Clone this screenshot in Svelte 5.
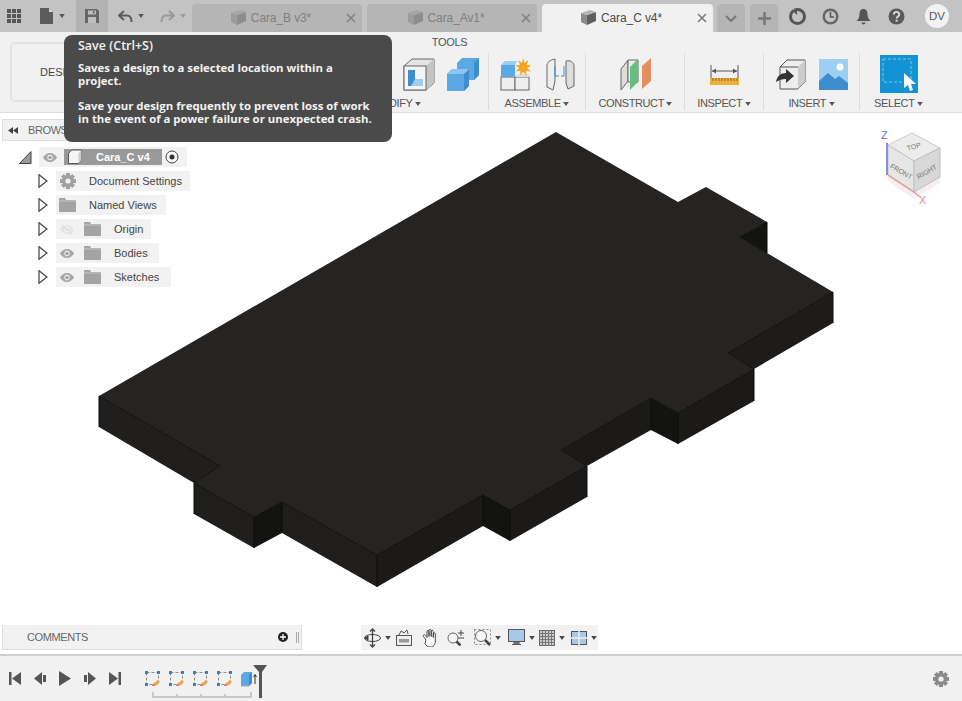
<script>
  const tabs = [
    { name: 'Cara_B v3*', active: false },
    { name: 'Cara_Av1*', active: false },
    { name: 'Cara_C v4*', active: true }
  ];
  const tree = [
    { name: 'Document Settings', kind: 'gear', eye: '' , w: 134 },
    { name: 'Named Views', kind: 'folder', eye: '', w: 110 },
    { name: 'Origin', kind: 'folder', eye: 'off', w: 95 },
    { name: 'Bodies', kind: 'folder', eye: 'on', w: 103 },
    { name: 'Sketches', kind: 'folder', eye: 'on', w: 115 }
  ];
  const top = '556,132 678,202 706,187 767,222 740,237 767,253 833,292 728,353 754,369 678,413 651,398 561,450 587,466 510,510 483,495 377,555 282,502 254,517 194,483 220,466 99,396';
  const walls = [
    ['99,396 220,466 194,483 99,427', '#201f1d'],
    ['194,483 254,517 254,548 194,514', '#1f1e1c'],
    ['254,517 282,502 282,533 254,548', '#131312'],
    ['282,502 377,555 377,587 282,533', '#1f1e1c'],
    ['377,555 483,495 483,526 377,587', '#1b1a18'],
    ['483,495 510,510 510,541 483,526', '#131312'],
    ['510,510 587,466 587,497 510,541', '#1b1a18'],
    ['561,450 651,398 651,430 587,466', '#1b1a18'],
    ['651,398 678,413 678,444 651,430', '#131312'],
    ['678,413 754,369 754,401 678,444', '#1b1a18'],
    ['728,353 833,292 833,323 754,369', '#1d1c1a'],
    ['740,237 767,222 767,253', '#131312']
  ];
  const edges = [
    '99,396 99,427', '220,466 99,396', '194,483 220,466', '194,483 194,514', '194,483 254,517 254,548',
    '254,517 282,502 282,533', '282,502 377,555 377,587', '377,555 483,495 483,526', '483,495 510,510 510,541',
    '510,510 587,466 587,497', '561,450 587,466', '561,450 651,398 651,430', '651,398 678,413 678,444',
    '678,413 754,369 754,401', '728,353 754,369', '728,353 833,292 833,323', '740,237 767,222 767,253', '740,237 767,253'
  ];
</script>

{#snippet caret(c = '#666')}
  <svg class="caret" width="6" height="4" viewBox="0 0 7 5"><path d="M0 0h7L3.500 5z" fill={c} /></svg>
{/snippet}

{#snippet cube(c1, c2, c3)}
  <svg width="17" height="16" viewBox="0 0 17 16">
    <path d="M1 3l6 2v10l-6-3z" fill={c1} />
    <path d="M7 5l9-3v9l-9 4z" fill={c2} />
    <path d="M1 3l9-3 6 2-9 3z" fill={c3} />
  </svg>
{/snippet}

{#snippet eye(off)}
  <svg width="16" height="11" viewBox="0 0 18 12">
    <path d="M1 6c3-4 5-5 8-5s5 1 8 5c-3 4-5 5-8 5s-5-1-8-5z" fill={off ? '#e6e6e6' : '#a8a8a8'} />
    <circle cx="9" cy="6" r="3" fill={off ? '#f2f2f2' : '#eee'} />
    <circle cx="9" cy="6" r="1.800" fill={off ? '#ddd' : '#999'} />
    {#if off}<path d="M3 1l12 10" stroke="#ddd" stroke-width="1.500" />{/if}
  </svg>
{/snippet}

{#snippet folder()}
  <svg width="17" height="14" viewBox="0 0 17 14"><path d="M0 0h6l1 2h10v12H0z" fill="#a3a3a3" /><path d="M0 3h17" stroke="#c9c9c9" /></svg>
{/snippet}

{#snippet gear()}
  <svg width="18" height="18" viewBox="0 0 18 18">
    <g fill="#a0a0a0">
      <circle cx="9" cy="9" r="6" />
      <rect x="7" y="1" width="4" height="16" />
      <rect x="1" y="7" width="16" height="4" />
      <rect x="7" y="1" width="4" height="16" transform="rotate(45 9 9)" />
      <rect x="7" y="1" width="4" height="16" transform="rotate(-45 9 9)" />
    </g>
    <circle cx="9" cy="9" r="2.600" fill="#f2f2f2" />
  </svg>
{/snippet}

{#snippet sketch()}
  <svg class="tl" width="16" height="16" viewBox="0 0 16 16">
    <rect x="1.500" y="1.500" width="12" height="12" fill="none" stroke="#8a8a8a" stroke-dasharray="3 2" />
    <g fill="#3b7fc4"><rect x="0" y="0" width="3" height="3" /><rect x="12" y="0" width="3" height="3" /><rect x="0" y="12" width="3" height="3" /></g>
    <path d="M8 13l5-4 2 2-5 4z" fill="#f0a640" /><path d="M8 13l-1 2 3 0z" fill="#d8574b" />
  </svg>
{/snippet}

<div class="app">
  <header class="top">
    <div class="hb apps">
      <svg width="14" height="14" viewBox="0 0 14 14" fill="#555">
        {#each [0, 5, 10] as y}{#each [0, 5, 10] as x}<rect {x} {y} width="4" height="4" />{/each}{/each}
      </svg>
    </div>
    <div class="hb file">
      <svg width="13" height="16" viewBox="0 0 13 16"><path d="M0 0h9l4 4v12H0z" fill="#5c5c5c" /><path d="M9 0v4h4" fill="#ddd" /></svg>
      {@render caret('#555')}
    </div>
    <div class="hb save">
      <svg width="14" height="14" viewBox="0 0 14 14"><path d="M0 0h12l2 2v12H0z" fill="#666" /><rect x="3" y="1.500" width="8" height="4" fill="#bdbdbd" /><rect x="3" y="8" width="8" height="6" fill="#bdbdbd" /><rect x="8" y="2" width="1.500" height="2.500" fill="#666" /></svg>
    </div>
    <div class="hb undo">
      <svg width="15" height="13" viewBox="0 0 15 13"><path d="M6 1L1 5.500 6 10M2 5.500h7c3 0 4.500 2 4.500 6.500" fill="none" stroke="#5c5c5c" stroke-width="2" /></svg>
      {@render caret('#555')}
    </div>
    <div class="hb undo">
      <svg width="15" height="13" viewBox="0 0 15 13"><path d="M9 1l5 4.500L9 10M13 5.500H6C3 5.500 1.500 7.500 1.500 12" fill="none" stroke="#999" stroke-width="2" /></svg>
      {@render caret('#999')}
    </div>

    <div class="tabs">
      {#each tabs as t}
        <div class="tab" class:active={t.active}>
          <span class="tabname">
            {#if t.active}
              {@render cube('#8a8a8a', '#5f5f5f', '#b5b5b5')}
            {:else}
              {@render cube('#9c9c9c', '#8d8d8d', '#a6a6a6')}
            {/if}
            {t.name}
          </span>
          <svg class="x" width="10" height="10" viewBox="0 0 10 10"><path d="M1 1l8 8M9 1l-8 8" stroke={t.active ? '#777' : '#808080'} stroke-width="1.500" /></svg>
        </div>
      {/each}
      <div class="tab mini">
        <svg width="12" height="7" viewBox="0 0 12 7"><path d="M1 1l5 5 5-5" fill="none" stroke="#777" stroke-width="2" /></svg>
      </div>
      <div class="tab mini">
        <svg width="13" height="13" viewBox="0 0 13 13"><path d="M6.500 0v13M0 6.500h13" stroke="#777" stroke-width="2.500" /></svg>
      </div>
    </div>

    <div class="status">
      <svg width="17" height="17" viewBox="0 0 17 17"><circle cx="8.500" cy="8.500" r="7" fill="none" stroke="#555" stroke-width="3" /><path d="M4 1l6 3-3 4z" fill="#c4c4c4" /><path d="M3 2h5v5z" fill="#555" /></svg>
      <svg width="17" height="17" viewBox="0 0 17 17"><circle cx="8.500" cy="8.500" r="8" fill="#666" /><circle cx="8.500" cy="8.500" r="5.500" fill="#c4c4c4" /><path d="M8.500 4v5H12" fill="none" stroke="#555" stroke-width="1.500" /></svg>
      <svg width="15" height="17" viewBox="0 0 15 17"><path d="M7.500 1c3 0 4 2.500 4 5 0 3 1 5 3 7H.5c2-2 3-4 3-7 0-2.500 1-5 4-5z" fill="#555" /><path d="M5.500 14.500a2 2 0 004 0z" fill="#555" /></svg>
      <svg width="17" height="17" viewBox="0 0 17 17"><circle cx="8.500" cy="8.500" r="8" fill="#5a5a5a" /><path d="M5.800 6.500c0-3.500 5.500-3.500 5.500 0 0 2-2.700 2-2.700 4" fill="none" stroke="#ddd" stroke-width="1.800" /><rect x="7.600" y="11.700" width="2" height="2" fill="#ddd" /></svg>
      <div class="avatar">DV</div>
    </div>
  </header>

  <section class="ribbon">
    <div class="design">DESIGN {@render caret('#444')}</div>
    <div class="tools">
      <div class="tools-title">TOOLS</div>
      <div class="groups">
        <div class="grp modify">
          <div class="icons">
            <svg width="32" height="33" viewBox="0 0 32 33"><rect x="1" y="8" width="24" height="24" fill="#eee" stroke="#666" /></svg>
            <svg width="32" height="33" viewBox="0 0 32 33"><rect x="1" y="8" width="24" height="24" fill="#eee" stroke="#666" /></svg>
            <svg width="32" height="33" viewBox="0 0 32 33">
              <path d="M1 8L9 1h22v24l-8 7H1z" fill="#e4e4e4" stroke="#666" />
              <path d="M23 32V8L31 1v24z" fill="#c4c4c4" />
              <rect x="1" y="8" width="22" height="24" fill="#f4f4f4" stroke="#666" />
              <path d="M5 12h7v9h8v7H5z" fill="#3e8dce" /><path d="M12 21h8v7h-12z" fill="#9dcdf0" />
            </svg>
            <svg width="32" height="33" viewBox="0 0 32 33">
              <path d="M10 5l5-5h17v17l-5 5H10z" fill="#5aa9e4" /><path d="M27 22V5l5-5v17z" fill="#3e8dce" />
              <path d="M0 16l5-5h17v17l-5 5H0z" fill="#5aa9e4" /><path d="M17 33V16l5-5v17z" fill="#3e8dce" /><path d="M0 16l5-5h17l-5 5z" fill="#8cc6ef" />
            </svg>
          </div>
          <div class="lbl">MODIFY {@render caret('#555')}</div>
        </div>
        <div class="grp assemble">
          <div class="icons">
            <svg width="32" height="33" viewBox="0 0 32 33">
              <rect x="1" y="19" width="14" height="13" fill="#eee" stroke="#666" /><rect x="15" y="19" width="14" height="13" fill="#eee" stroke="#666" />
              <path d="M15 19l3-3h11v3z" fill="#ddd" />
              <rect x="1" y="7" width="14" height="12" fill="#5aa9e4" /><path d="M1 7l4-4h12l-2 4z" fill="#9bcdf0" />
              <path d="M23 0l1.500 5 4-3-2 5 5 .500-4.500 2.500 4 3.500-5-.8.500 5-3.500-4-3 4 .500-5-5 .8 4-3.500-4.500-2.500 5-.5-2-5 4 3z" fill="#f2a51f" />
            </svg>
            <svg width="29" height="33" viewBox="0 0 29 33" fill="none" stroke="#666">
              <path d="M1 8c0-4 3-6 8-7v22l-2 9-6-3z" fill="#eee" />
              <path d="M28 8c0-4-4-6-8-5v22l2 6 6-3z" fill="#ddd" />
              <path d="M9 8v10h4M18 8v10h-3" stroke="#3e8dce" />
            </svg>
          </div>
          <div class="lbl">ASSEMBLE {@render caret('#555')}</div>
        </div>
        <div class="grp construct">
          <div class="icons">
            <svg width="32" height="33" viewBox="0 0 32 33">
              <path d="M1 11L8 2v21l-7 9z" fill="#ddd" stroke="#666" /><path d="M8 2h10v22H8z" fill="#ececec" stroke="#666" />
              <path d="M10 32V9l8-8h0v23z" fill="#67bf7f" />
              <path d="M22 31V8l9-8v23z" fill="#e58f5f" />
            </svg>
          </div>
          <div class="lbl">CONSTRUCT {@render caret('#555')}</div>
        </div>
        <div class="grp inspect">
          <div class="icons">
            <svg width="29" height="20" viewBox="0 0 29 20">
              <path d="M1 0v13M28 0v13" stroke="#555" /><path d="M2 6h25" stroke="#555" /><path d="M2 6l4-2.500v5zM27 6l-4-2.500v5z" fill="#555" />
              <rect x="0" y="13" width="29" height="7" fill="#eeb03a" />
              <path d="M3 13v3M6 13v3M9 13v3M12 13v3M15 13v3M18 13v3M21 13v3M24 13v3M27 13v3" stroke="#8a6420" />
            </svg>
          </div>
          <div class="lbl">INSPECT {@render caret('#555')}</div>
        </div>
        <div class="grp insert">
          <div class="icons">
            <svg width="30" height="31" viewBox="0 0 30 31">
              <path d="M4 8l7-7h18v22l-7 7H4z" fill="#eee" stroke="#555" /><path d="M22 30V8l7-7v22z" fill="#ccc" />
              <path d="M4 8h18" stroke="#555" />
              <path d="M0 23c1-6 5-9 10-9v-4l8 7-8 7v-4c-4 0-7 1-10 3z" fill="#333" />
            </svg>
            <svg width="29" height="31" viewBox="0 0 29 31">
              <rect x="0" y="0" width="29" height="31" fill="#9ccff2" />
              <path d="M0 31V22l9-8 7 6 4-3 9 7v7z" fill="#3e8dce" />
              <circle cx="21" cy="8" r="3.500" fill="#fff" />
            </svg>
          </div>
          <div class="lbl">INSERT {@render caret('#555')}</div>
        </div>
        <div class="grp select">
          <div class="icons">
            <svg width="38" height="38" viewBox="0 0 38 38">
              <rect width="38" height="38" fill="#1393d4" />
              <rect x="3" y="4" width="28" height="23" fill="none" stroke="#7cc7ec" stroke-dasharray="3 2" />
              <path d="M24 18v15l4-3 2 6 3-1-2-6h5z" fill="#fff" />
            </svg>
          </div>
          <div class="lbl">SELECT {@render caret('#555')}</div>
        </div>
      </div>
    </div>
  </section>

  <main class="view">
    <svg class="model" width="962" height="701" viewBox="0 0 962 701">
      {#each walls as w}<polygon points={w[0]} fill={w[1]} />{/each}
      <polygon points={top} fill="#252422" />
      {#each edges as e}<polyline points={e} fill="none" stroke="#0b0b0a" stroke-width="1" />{/each}
    </svg>

    <aside class="browser">
      <div class="browser-bar">
        <svg width="10" height="7" viewBox="0 0 10 7"><path d="M5 0v7L0 3.500zM10 0v7L5 3.500z" fill="#444" /></svg>
        <span>BROWSER</span>
      </div>
      <div class="row root">
        <svg class="exp" width="13" height="13" viewBox="0 0 13 13"><path d="M12 .5v12H.5z" fill="#999" stroke="#444" /></svg>
        <div class="item rootitem">
          {@render eye(false)}
          <div class="rootname">
            <svg width="16" height="16" viewBox="0 0 16 16"><path d="M1.500 4.500L4.500 1h10v10l-3 3.500h-10z" fill="#f5f5f5" stroke="#555" /><path d="M11.500 14.500v-10L14.500 1v10z" fill="#ccc" /></svg>
            <b>Cara_C v4</b>
          </div>
          <svg class="radio" width="14" height="14" viewBox="0 0 14 14"><circle cx="7" cy="7" r="6" fill="#f8f8f8" stroke="#444" /><circle cx="7" cy="7" r="2.500" fill="#333" /></svg>
        </div>
      </div>
      {#each tree as n}
        <div class="row">
          <svg class="exp child" width="10" height="14" viewBox="0 0 10 14"><path d="M1 .7v12.600L9 7z" fill="#fff" stroke="#444" stroke-width="1.200" /></svg>
          <div class="item" style="width:{n.w}px">
            {#if n.kind === 'gear'}
              <span class="ic">{@render gear()}</span>
            {:else if n.eye}
              <span class="ic">{@render eye(n.eye === 'off')}</span>
              <span class="ic second">{@render folder()}</span>
            {:else}
              <span class="ic">{@render folder()}</span>
            {/if}
            <span class="nm" class:deep={n.eye}>{n.name}</span>
          </div>
        </div>
      {/each}
    </aside>

    <div class="vcube">
      <svg width="64" height="80" viewBox="0 0 64 80">
        <path d="M9 48l26 17 26-15v6L35 72 9 54z" fill="#f7efef" />
        <path d="M9 18L33 6l28 15-26 13z" fill="#ececec" stroke="#c8c8c8" />
        <path d="M9 18l26 16v31L9 48z" fill="#e6e6e6" stroke="#c4c4c4" />
        <path d="M35 34l26-13v29L35 65z" fill="#d8d8d8" stroke="#bebebe" />
        <path d="M8 16v32" stroke="#6a6fd0" stroke-width="1.500" />
        <path d="M9 48l26 17 6 5" stroke="#e0a0a0" stroke-width="1.500" fill="none" />
        <text class="fc" x="35" y="22" transform="rotate(-14 35 20)">TOP</text>
        <text class="fc" x="22" y="47" transform="rotate(30 22 45)">FRONT</text>
        <text class="fc" x="48" y="47" transform="rotate(-30 48 45)">RIGHT</text>
        <text class="ax z" x="2" y="12">Z</text>
        <text class="ax xa" x="40" y="77">X</text>
      </svg>
    </div>

    <div class="comments">
      <span class="c-title">COMMENTS</span>
      <svg width="10" height="10" viewBox="0 0 10 10"><circle cx="5" cy="5" r="5" fill="#222" /><path d="M5 2v6M2 5h6" stroke="#fff" stroke-width="1.300" /></svg>
      <svg class="grip" width="3" height="11" viewBox="0 0 3 11"><path d="M.5 0v11M2.500 0v11" stroke="#aaa" /></svg>
    </div>

    <div class="nav">
      <div class="nv">
        <svg width="17" height="20" viewBox="0 0 17 20" fill="none" stroke="#444"><ellipse cx="8.500" cy="10" rx="8" ry="3.500" /><path d="M8.500 1v18M6 3.500L8.500 1 11 3.500M6 16.500L8.500 19 11 16.500" stroke-width="1.300" /><path d="M1 10l3-2v4z" fill="#333" /></svg>
        {@render caret('#444')}
      </div>
      <div class="nv">
        <svg width="16" height="16" viewBox="0 0 16 16"><rect x=".5" y="5.500" width="15" height="10" fill="#eee" stroke="#555" /><rect x="3" y="9" width="10" height="3.500" fill="#999" /><path d="M3 5l2-4 3 2 3-3 1 4" fill="none" stroke="#555" /></svg>
      </div>
      <div class="nv">
        <svg width="17" height="18" viewBox="0 0 17 18" fill="#fff" stroke="#444"><path d="M4 11L1.500 7.500c-1-1.500 1-2.500 2-1L5 8.500V2.500c0-1.500 2-1.500 2 0v5-6c0-1.500 2.200-1.500 2.200 0v6-5c0-1.500 2.100-1.500 2.100 0v6-3.500c0-1.500 2-1.500 2 0v7c0 4-2 6-5 6-3 0-4-1.500-5.300-3.500z" /></svg>
      </div>
      <div class="nv">
        <svg width="17" height="16" viewBox="0 0 17 16"><circle cx="6" cy="8" r="5" fill="#f7f7f7" stroke="#666" /><path d="M9.500 11.500l4 4" stroke="#444" stroke-width="2.500" /><path d="M11 3h6M14 0v6M11 8h6" stroke="#444" /></svg>
      </div>
      <div class="nv">
        <svg width="17" height="17" viewBox="0 0 17 17"><rect x=".5" y=".5" width="16" height="15" fill="none" stroke="#888" stroke-dasharray="2 2" /><circle cx="7" cy="7" r="5.500" fill="#f7f7f7" stroke="#666" /><path d="M11 11l5 5" stroke="#444" stroke-width="2.500" /></svg>
        {@render caret('#444')}
      </div>
      <div class="nv">
        <svg width="17" height="17" viewBox="0 0 17 17"><rect x=".5" y=".5" width="16" height="12" fill="#a8c8e8" stroke="#555" /><path d="M6 13h5v2H6zM4 15.500h9" fill="#999" stroke="#555" /></svg>
        {@render caret('#444')}
      </div>
      <div class="nv">
        <svg width="16" height="16" viewBox="0 0 16 16"><rect x=".5" y=".5" width="15" height="15" fill="#ccc" stroke="#666" /><path d="M3.500 0v16M6.500 0v16M9.500 0v16M12.500 0v16M0 3.500h16M0 6.500h16M0 9.500h16M0 12.500h16" stroke="#777" /></svg>
        {@render caret('#444')}
      </div>
      <div class="nv">
        <svg width="16" height="14" viewBox="0 0 16 14"><rect x=".5" y=".5" width="15" height="13" fill="#a8c8e8" stroke="#555" /><path d="M8 0v14M0 7h16" stroke="#eee" stroke-width="1.500" /></svg>
        {@render caret('#444')}
      </div>
    </div>
  </main>

  <footer class="timeline">
    <div class="controls">
      <svg width="12" height="13" viewBox="0 0 12 13" fill="#555"><rect width="2.500" height="13" /><path d="M12 0v13L3 6.500z" /></svg>
      <svg width="12" height="13" viewBox="0 0 12 13" fill="#555"><path d="M8 0v13L0 6.500z" /><rect x="9" y="3" width="3" height="7" /></svg>
      <svg width="12" height="15" viewBox="0 0 12 15" fill="#555"><path d="M0 0v15l12-7.500z" /></svg>
      <svg width="12" height="13" viewBox="0 0 12 13" fill="#555"><path d="M4 0v13l8-6.500z" /><rect y="3" width="3" height="7" /></svg>
      <svg width="12" height="13" viewBox="0 0 12 13" fill="#555"><path d="M0 0v13l9-6.500z" /><rect x="9.500" width="2.500" height="13" /></svg>
    </div>
    <div class="track">
      <div class="steps">
        {#each [0, 1, 2, 3] as i}{@render sketch()}{/each}
        <svg class="tl" width="16" height="16" viewBox="0 0 16 16"><path d="M0 4l3-3h8v11l-3 3H0z" fill="#5aa9e4" /><path d="M8 15V4l3-3v11z" fill="#3e8dce" /><path d="M0 15h8" stroke="#aaa" /><path d="M14 13V4M12.500 6L14 3.500 15.500 6" fill="none" stroke="#333" /></svg>
      </div>
      <svg class="bracket" width="100" height="6" viewBox="0 0 100 6"><path d="M1 0v5h98V0M25 2v3M49 2v3M73 2v3" fill="none" stroke="#bbb" stroke-width="1.500" /></svg>
      <svg class="marker" width="14" height="33" viewBox="0 0 14 33"><path d="M0 0h14l-5 7v26H6V7z" fill="#555" /></svg>
    </div>
    <div class="settings">
      <svg width="18" height="18" viewBox="0 0 18 18">
        <g fill="#8a8a8a"><circle cx="9" cy="9" r="6" /><rect x="7" y="1" width="4" height="16" /><rect x="1" y="7" width="16" height="4" /><rect x="7" y="1" width="4" height="16" transform="rotate(45 9 9)" /><rect x="7" y="1" width="4" height="16" transform="rotate(-45 9 9)" /></g>
        <circle cx="9" cy="9" r="2.600" fill="#f1f1f1" />
      </svg>
    </div>
  </footer>

  <div class="tip">
    <p class="tt">Save (Ctrl+S)</p>
    <p>Saves a design to a selected location within a<br />project.</p>
    <p>Save your design frequently to prevent loss of work<br />in the event of a power failure or unexpected crash.</p>
  </div>
</div>

<style>
  :global(body) { margin: 0; background: #fff; }
  .app {
    position: relative; width: 962px; height: 701px; overflow: hidden; display: flex; flex-direction: column;
    font-family: "Liberation Sans", Arial, sans-serif; font-size: 12px; color: #555; background: #fff;
  }
  svg { display: block; flex: none; }
  .caret { display: inline-block; vertical-align: 1px; }

  .top { height: 32px; flex: none; display: flex; background: #c3c3c3; }
  .hb { display: flex; align-items: center; height: 32px; box-sizing: border-box; }
  .apps { width: 28px; padding-left: 7px; }
  .file { width: 48px; padding-left: 12px; gap: 6px; }
  .save { width: 32px; justify-content: center; background: #b3b3b3; }
  .undo { width: 42px; padding-left: 10px; gap: 5px; }

  .tabs { display: flex; gap: 5px; }
  .tab {
    width: 170px; height: 28px; margin-top: 4px; background: #b5b5b5; border-radius: 4px 4px 0 0;
    display: flex; align-items: center; color: #7f7f7f; font-size: 12px; letter-spacing: -0.1px;
  }
  .tab.active { background: #f1f1f1; color: #4c4c4c; width: 171px; }
  .tabname { flex: 1; display: flex; align-items: center; justify-content: center; gap: 4px; padding-left: 3px; }
  .x { margin: 0 6px 0 0; }
  .tab.mini { width: 28px; justify-content: center; margin-left: -1px; }
  .tab.mini + .tab.mini { margin-left: 0; }

  .status { display: flex; align-items: center; height: 32px; margin-left: 11px; gap: 16px; }
  .status svg:nth-child(3) { margin: 0 1px; }
  .avatar {
    width: 24px; height: 24px; border-radius: 50%; background: #f2f2f2; margin-left: 4px; text-align: center;
    line-height: 24px; font-size: 11.500px; color: #555;
  }

  .ribbon { height: 81px; flex: none; box-sizing: border-box; background: #f1f1f1; border-bottom: 1px solid #dedede; display: flex; }
  .design {
    width: 98px; height: 60px; margin: 10px 0 0 10px; box-sizing: border-box; border: 2px solid #e2e2e2; border-radius: 5px;
    display: flex; align-items: center; gap: 5px; padding-left: 28px; color: #444; font-size: 11px;
  }
  .tools { margin-left: 18px; width: 810px; position: relative; }
  .tools-title { text-align: center; margin: 4px 0 0 0; height: 17px; line-height: 13px; font-size: 11px; letter-spacing: -0.3px; color: #555; width: 647px; }
  .groups { display: flex; height: 57px; }
  .grp { display: flex; flex-direction: column; align-items: center; box-sizing: border-box; border-right: 1px solid #dcdcdc; }
  .grp.select { border-right: none; padding-left: 2px; }
  .modify { width: 363px; padding-left: 179px; }
  .assemble { width: 97px; }
  .construct { width: 99px; padding-left: 1px; }
  .inspect { width: 79px; }
  .insert { width: 96px; }
  .select { width: 75px; }
  .icons { height: 38px; display: flex; align-items: center; gap: 12px; margin-top: 3px; }
  .assemble .icons { gap: 14px; }
  .insert .icons { gap: 13px; }
  .lbl { font-size: 11px; letter-spacing: -0.4px; line-height: 13px; margin-top: 4px; white-space: nowrap; color: #555; }
  .select .icons { margin-top: 1px; height: 40px; }
  .select .lbl { margin-top: 4px; }

  .view { flex: 1; position: relative; background: #fff; min-height: 0; }
  .model { position: absolute; left: 0; top: -113px; }

  .browser { position: absolute; left: 2px; top: 6px; width: 300px; }
  .browser-bar {
    height: 22px; box-sizing: border-box; background: #f2f2f2; border: 1px solid #ddd; display: flex; align-items: center;
    padding-left: 5px; gap: 10px; font-size: 11px; letter-spacing: -0.4px; color: #666;
  }
  .row { height: 24px; display: flex; align-items: center; padding-left: 36px; }
  .row.root { margin-top: 4px; padding-left: 17px; }
  .exp.child { margin-right: 8px; }
  .exp { margin-right: 7px; }
  .item { height: 20px; background: #f2f2f2; display: flex; align-items: center; position: relative; color: #444; font-size: 11px; }
  .rootitem { width: 148px; padding-left: 3px; box-sizing: border-box; }
  .rootname {
    width: 98px; height: 16px; margin-left: 6px; background: #999; display: flex; align-items: center; padding-left: 3px;
    box-sizing: border-box; color: #fff;
  }
  .rootname b { margin-left: 13px; font-size: 11px; }
  .radio { margin-left: 3px; }
  .ic { margin-left: 2px; display: block; }
  .second { margin-left: 9px; }
  .item .ic:first-child { margin-left: 3px; }
  .nm { position: absolute; left: 33px; }
  .nm.deep { left: 58px; }

  .vcube { position: absolute; right: 19px; top: 14px; }
  .fc { font: 7px "Liberation Sans", sans-serif; fill: #777; text-anchor: middle; }
  .ax { font: 11px "Liberation Sans", sans-serif; }
  .z { fill: #6a6fd0; }
  .xa { fill: #e0908f; }

  .comments {
    position: absolute; left: 2px; top: 512px; width: 300px; height: 25px; box-sizing: border-box;
    background: #f2f2f2; border: 1px solid #ddd; border-top: none; display: flex; align-items: center;
    padding-left: 24px; font-size: 11px; letter-spacing: -0.4px; color: #666;
  }
  .c-title { flex: 1; }
  .grip { margin: 0 2px 0 8px; }

  .nav {
    position: absolute; left: 361px; top: 512px; width: 237px; height: 25px; box-sizing: border-box;
    background: #f2f2f2; display: flex; align-items: center; padding-left: 3px;
  }
  .nv { display: flex; align-items: center; gap: 4px; margin-right: 8px; }
  .nv:nth-child(2) { margin-right: 10px; }
  .nv:nth-child(1) { margin-right: 5px; }
  .nv:nth-child(4) { margin-right: 10px; }
  .nv:nth-child(5) { margin-right: 7px; }
  .nv:nth-child(6) { margin-right: 4px; }
  .nv:nth-child(7) { margin-right: 6px; }

  .timeline {
    height: 47px; flex: none; box-sizing: border-box; background: #f1f1f1; border-top: 2px solid #cfcfcf;
    display: flex; align-items: center;
  }
  .controls { display: flex; align-items: center; gap: 13px; padding-left: 9px; }
  .track { position: relative; height: 45px; margin-left: 24px; width: 130px; }
  .steps { display: flex; gap: 8px; margin-top: 15px; }
  .bracket { position: absolute; left: 7px; top: 36px; }
  .marker { position: absolute; left: 108px; top: 9px; }
  .settings { margin-left: auto; margin-right: 12px; }

  .tip {
    position: absolute; left: 64px; top: 35px; width: 328px; height: 107px; box-sizing: border-box; background: #4a4a4a;
    border-radius: 8px; padding: 4px 0 0 14px; color: #f2f2f2; font-family: "Open Sans", sans-serif; font-size: 11.370px; font-weight: 700; line-height: 13px;
  }
  .tip p { margin: 0 0 12px; white-space: nowrap; }
  .tip .tt { margin-bottom: 9px; font-weight: 600; font-size: 12.500px; }
</style>
